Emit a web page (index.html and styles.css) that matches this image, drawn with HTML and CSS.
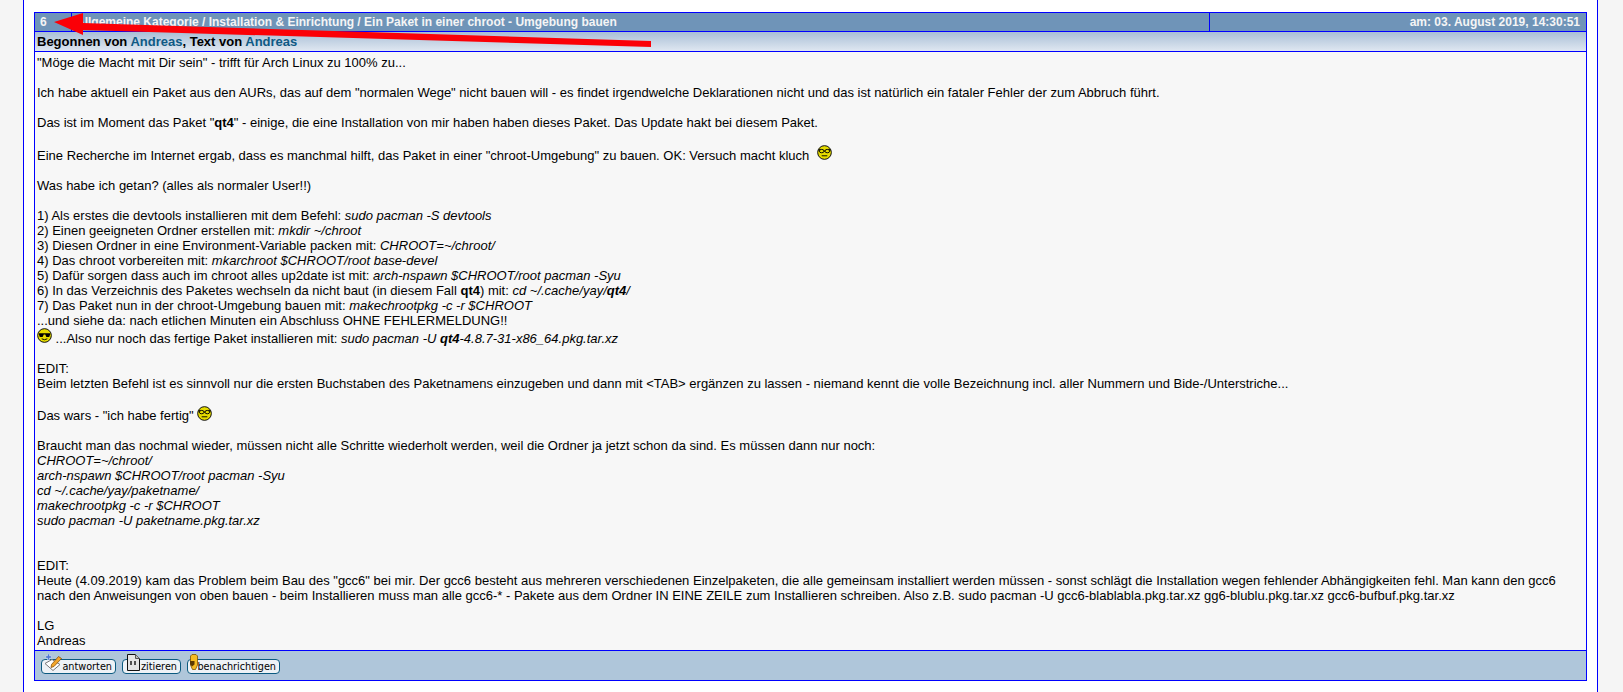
FILE: index.html
```html
<!DOCTYPE html>
<html lang="de">
<head>
<meta charset="utf-8">
<title>Ein Paket in einer chroot - Umgebung bauen</title>
<link rel="stylesheet" href="styles.css">
</head>
<body>
<svg width="0" height="0" class="defs">
  <symbol id="cool" viewBox="0 0 16 16">
    <circle cx="8" cy="8" r="7.3" fill="#e6dc00" stroke="#000" stroke-width="1"/>
    <path d="M2 5.500h12v1.500l-1 2.500h-3l-1.200-2.500h-1.600l-1.200 2.500h-3l-1-2.500z" fill="#000"/>
    <path d="M5 11.500q3 2 6 0" fill="none" stroke="#000"/>
  </symbol>
  <symbol id="nerd" viewBox="0 0 16 16">
    <circle cx="8" cy="8" r="7.3" fill="#e6dc00" stroke="#000" stroke-width="1"/>
    <ellipse cx="5" cy="6.500" rx="2.500" ry="1.800" fill="none" stroke="#000"/>
    <ellipse cx="11" cy="6.500" rx="2.500" ry="1.800" fill="none" stroke="#000"/>
    <path d="M1.500 5.500l2 -1M14.500 5.500l-2 -1M7.500 6.500h1M5 11.500h6" fill="none" stroke="#000"/>
  </symbol>
</svg>
<main class="page">
  <section class="post">
    <header class="titlebar">
      <div class="num">6</div>
      <div class="subject">Allgemeine Kategorie / Installation &amp; Einrichtung / Ein Paket in einer chroot - Umgebung bauen</div>
      <div class="date">am: 03. August 2019, 14:30:51</div>
    </header>
    <div class="byline">Begonnen von <a href="#">Andreas</a>, Text von <a href="#">Andreas</a></div>
    <div class="body">
      "Möge die Macht mit Dir sein" - trifft für Arch Linux zu 100% zu...<br>
      <br>
      Ich habe aktuell ein Paket aus den AURs, das auf dem "normalen Wege" nicht bauen will - es findet irgendwelche Deklarationen nicht und das ist natürlich ein fataler Fehler der zum Abbruch führt.<br>
      <br>
      Das ist im Moment das Paket "<b>qt4</b>" - einige, die eine Installation von mir haben haben dieses Paket. Das Update hakt bei diesem Paket.<br>
      <br>
      Eine Recherche im Internet ergab, dass es manchmal hilft, das Paket in einer "chroot-Umgebung" zu bauen. OK: Versuch macht kluch &nbsp;<svg class="smiley"><use href="#nerd"/></svg><br>
      <br>
      Was habe ich getan? (alles als normaler User!!)<br>
      <br>
      1) Als erstes die devtools installieren mit dem Befehl: <i>sudo pacman -S devtools</i><br>
      2) Einen geeigneten Ordner erstellen mit: <i>mkdir ~/chroot</i><br>
      3) Diesen Ordner in eine Environment-Variable packen mit: <i>CHROOT=~/chroot/</i><br>
      4) Das chroot vorbereiten mit: <i>mkarchroot $CHROOT/root base-devel</i><br>
      5) Dafür sorgen dass auch im chroot alles up2date ist mit: <i>arch-nspawn $CHROOT/root pacman -Syu</i><br>
      6) In das Verzeichnis des Paketes wechseln da nicht baut (in diesem Fall <b>qt4</b>) mit: <i>cd ~/.cache/yay/<b>qt4</b>/</i><br>
      7) Das Paket nun in der chroot-Umgebung bauen mit: <i>makechrootpkg -c -r $CHROOT</i><br>
      ...und siehe da: nach etlichen Minuten ein Abschluss OHNE FEHLERMELDUNG!!<br>
      <svg class="smiley"><use href="#cool"/></svg> ...Also nur noch das fertige Paket installieren mit: <i>sudo pacman -U <b>qt4</b>-4.8.7-31-x86_64.pkg.tar.xz</i><br>
      <br>
      EDIT:<br>
      Beim letzten Befehl ist es sinnvoll nur die ersten Buchstaben des Paketnamens einzugeben und dann mit &lt;TAB&gt; ergänzen zu lassen - niemand kennt die volle Bezeichnung incl. aller Nummern und Bide-/Unterstriche...<br>
      <br>
      Das wars - "ich habe fertig" <svg class="smiley smiley-low"><use href="#nerd"/></svg><br>
      <br>
      Braucht man das nochmal wieder, müssen nicht alle Schritte wiederholt werden, weil die Ordner ja jetzt schon da sind. Es müssen dann nur noch:<br>
      <i>CHROOT=~/chroot/</i><br>
      <i>arch-nspawn $CHROOT/root pacman -Syu</i><br>
      <i>cd ~/.cache/yay/paketname/</i><br>
      <i>makechrootpkg -c -r $CHROOT</i><br>
      <i>sudo pacman -U paketname.pkg.tar.xz</i><br>
      <br>
      <br>
      EDIT:<br>
      Heute (4.09.2019) kam das Problem beim Bau des "gcc6" bei mir. Der gcc6 besteht aus mehreren verschiedenen Einzelpaketen, die alle gemeinsam installiert werden müssen - sonst schlägt die Installation wegen fehlender Abhängigkeiten fehl. Man kann den gcc6 nach den Anweisungen von oben bauen - beim Installieren muss man alle gcc6-* - Pakete aus dem Ordner IN EINE ZEILE zum Installieren schreiben. Also z.B. sudo pacman -U gcc6-blablabla.pkg.tar.xz gg6-blublu.pkg.tar.xz gcc6-bufbuf.pkg.tar.xz<br>
      <br>
      LG<br>
      Andreas
    </div>
    <footer class="actions">
      <a class="btn btn-reply" href="#">
        <svg class="ico" viewBox="0 0 18 18"><path d="M1 9.500l7-4 8 5-7 6z" fill="#fff" stroke="#777"/><path d="M7.500 10.500L14.500 2.500l3 2-7.500 8-3 1z" fill="#f2a52a" stroke="#7a4300" stroke-width=".7"/><path d="M3.500 0h2v2h2v2h-2v2h-2V4h-2V2h2z" fill="#4f77cf" stroke="#dfe6f7" stroke-width=".5"/></svg>antworten</a>
      <a class="btn btn-quote" href="#">
        <svg class="ico ico-quote" viewBox="0 0 13 17"><path d="M.500.500h8l4 4v12H.500z" fill="#e4e4e4" stroke="#111"/><path d="M8.500.500v4h4" fill="#bbb" stroke="#555"/><path d="M4 7v4M8 7v4" stroke="#000" stroke-width="1.300"/></svg>zitieren</a>
      <a class="btn btn-notify" href="#">
        <svg class="ico ico-notify" viewBox="0 0 8 16"><path d="M2 .500h4l1.500 1.500v9L5.500 15.500h-3L.500 11V2z" fill="#f4bc22" stroke="#7a5200" stroke-width=".8"/><path d="M0 7h4.500v3.500L2 12.500 0 10z" fill="#5a3a00"/></svg>benachrichtigen</a>
    </footer>
  </section>
</main>
<svg class="arrow" viewBox="0 0 660 50" width="660" height="50"><polygon points="54,22 83,13 83,23 651,41 651,47 83,30 83,35" fill="#fb0007"/></svg>
</body>
</html>
```
FILE: styles.css
```css
html, body {
  margin: 0;
  height: 100%;
}
body {
  background: #f5f5f5;
  font-family: "Liberation Sans", Arial, sans-serif;
  font-size: 13px;
  color: #000;
  overflow: hidden;
  position: relative;
}
.defs {
  position: absolute;
}
.page {
  box-sizing: border-box;
  margin: 0 25px 0 23px;
  height: 692px;
  padding: 12px 10px 0;
  background: #fff;
  border-left: 1px solid #0000ff;
  border-right: 1px solid #0000ff;
}
.post {
  border: 1px solid #0000ff;
  height: 669px;
  box-sizing: border-box;
  display: flex;
  flex-direction: column;
}
.titlebar {
  display: flex;
  height: 18px;
  flex: none;
  background: #6f94b8;
  color: #f5f5f5;
  font-size: 12px;
  font-weight: bold;
  line-height: 18px;
  border-bottom: 1px solid #0000ff;
}
.num {
  width: 37px;
  padding-left: 5px;
  box-sizing: border-box;
  flex: none;
  border-right: 1px solid #0000ff;
}
.subject {
  flex: 1;
  padding-left: 4px;
}
.date {
  width: 377px;
  box-sizing: border-box;
  flex: none;
  text-align: right;
  padding-right: 6px;
  border-left: 1px solid #0000ff;
}
.byline {
  flex: none;
  height: 19px;
  line-height: 19px;
  padding-left: 2px;
  font-weight: bold;
  background: linear-gradient(#a9bfd6, #dfe7f1);
  border-bottom: 1px solid #0000ff;
}
.byline a {
  color: #0f5a85;
  text-decoration: none;
}
.body {
  flex: 1;
  min-height: 0;
  padding: 3px 2px 0;
  line-height: 15px;
  background: #f7f7f7;
  border-bottom: 1px solid #0000ff;
}
.smiley {
  width: 15px;
  height: 15px;
  vertical-align: baseline;
}
.smiley-low {
  vertical-align: -1px;
}
.actions {
  flex: none;
  height: 29px;
  box-sizing: border-box;
  background: #afc6da;
  display: flex;
  align-items: flex-start;
  gap: 6px;
  padding: 8px 6px 0;
}
.btn {
  box-sizing: border-box;
  display: flex;
  align-items: center;
  justify-content: flex-end;
  position: relative;
  height: 15px;
  border: 1px solid #0b5a80;
  border-radius: 4px;
  background: #eef2f6;
  color: #000;
  font-family: "DejaVu Sans", sans-serif;
  font-size: 9.7px;
  text-decoration: none;
  padding: 0 3px 0 0;
}
.btn-reply {
  width: 75px;
}
.btn-quote {
  width: 59px;
}
.btn-notify {
  width: 93px;
}
.ico {
  position: absolute;
  left: 2px;
  top: -6px;
  width: 18px;
  height: 18px;
}
.ico-quote {
  left: 4px;
  width: 13px;
  height: 17px;
}
.ico-notify {
  width: 8px;
  height: 16px;
}
.arrow {
  position: absolute;
  left: 0;
  top: 0;
}
```
